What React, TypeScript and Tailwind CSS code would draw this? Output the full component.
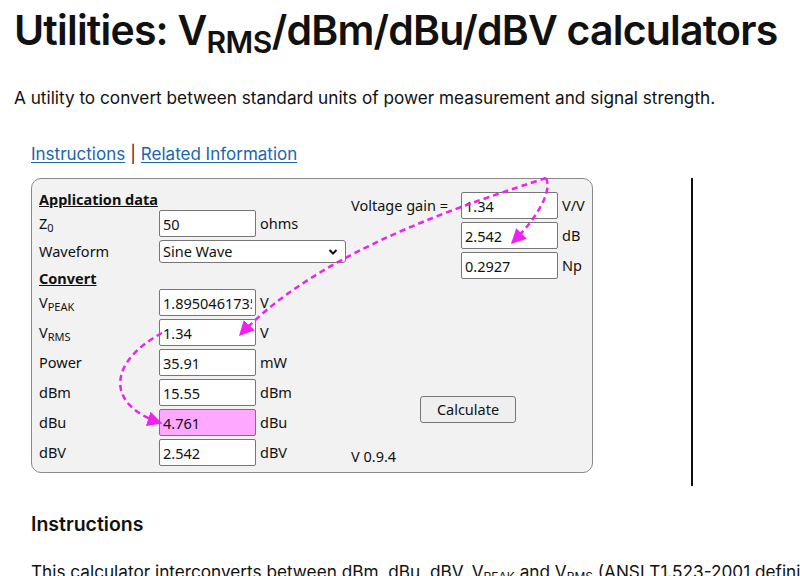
import React from "react";

const calcFont = { fontFamily: '"Noto Sans", "Open Sans", sans-serif' };

function Field({ value, pink }: { value: string; pink?: boolean }) {
  return (
    <input
      readOnly
      value={value}
      className={
        "h-[27px] w-[97px] rounded-[2px] border border-[#767676] px-[3px] text-[14.5px] text-[#111] outline-none " +
        (pink ? "bg-[#ffa8ff]" : "bg-white")
      }
      style={calcFont}
    />
  );
}

function Row({ label, value, unit, pink }: { label: React.ReactNode; value: string; unit: string; pink?: boolean }) {
  return (
    <div className="flex h-[27px] items-center">
      <div className="w-[120px] text-[14.5px] text-[#111]">{label}</div>
      <Field value={value} pink={pink} />
      <div className="ml-[4px] text-[14.5px] text-[#111]">{unit}</div>
    </div>
  );
}

function Sub({ v, s }: { v: string; s: string }) {
  return (
    <span>
      {v}
      <span className="relative top-[3px] text-[11px]">{s}</span>
    </span>
  );
}

export default function App() {
  return (
    <div className="relative h-[576px] w-[800px] overflow-hidden bg-white text-[#111]">
      <h1
        className="whitespace-nowrap pl-[14px] pt-[5px] text-[41px] font-semibold leading-[50px] tracking-[-0.8px] text-[#111]"
        style={{ fontFamily: "Inter, sans-serif" }}
      >
        Utilities: V<span className="relative top-[8px] text-[30px] tracking-[-0.5px]">RMS</span>/dBm/dBu/dBV calculators
      </h1>
      <p className="mt-[27px] pl-[14px] text-[17.2px] leading-[24px]" style={{ fontFamily: "Inter, sans-serif" }}>
        A utility to convert between standard units of power measurement and signal strength.
      </p>

      <div className="mt-[32px] flex items-center pl-[31px] text-[17px] leading-[24px]" style={{ fontFamily: "Inter, sans-serif" }}>
        <a className="text-[#1c64b0] underline underline-offset-2" href="#">
          Instructions
        </a>
        <span className="mx-[5px] text-[#3a2a20]">|</span>
        <a className="text-[#1c64b0] underline underline-offset-2" href="#">
          Related Information
        </a>
      </div>

      <div className="mt-[12px] flex pl-[31px]">
        <div
          className="flex h-[295px] w-[562px] rounded-[10px] border border-[#8a8a8a] bg-[#f2f2f2] pl-[7px]"
          style={calcFont}
        >
          <div className="flex w-[312px] flex-col pt-[10px]">
            <div className="h-[20px] text-[14.5px] font-bold leading-[20px] underline">Application data</div>
            <div className="mt-[1px]">
              <Row label={<Sub v="Z" s="0" />} value="50" unit="ohms" />
            </div>
            <div className="mt-[3px] flex h-[23px] items-center">
              <div className="w-[120px] text-[14.5px]">Waveform</div>
              <div className="relative flex h-[23px] w-[187px] items-center rounded-[3px] border border-[#767676] bg-white pl-[3px] text-[14.5px]">
                Sine Wave
                <svg className="absolute right-[7px] top-[7px]" width="10" height="8" viewBox="0 0 10 8">
                  <path d="M1.5 2 L5 5.5 L8.5 2" fill="none" stroke="#111" strokeWidth="2" />
                </svg>
              </div>
            </div>
            <div className="mt-[5px] h-[20px] text-[14.5px] font-bold leading-[20px] underline">Convert</div>
            <div className="mt-[1px] flex flex-col gap-[3px]">
              <Row label={<Sub v="V" s="PEAK" />} value="1.8950461735" unit="V" />
              <Row label={<Sub v="V" s="RMS" />} value="1.34" unit="V" />
              <Row label="Power" value="35.91" unit="mW" />
              <Row label="dBm" value="15.55" unit="dBm" />
              <Row label="dBu" value="4.761" unit="dBu" pink />
              <Row label="dBV" value="2.542" unit="dBV" />
            </div>
          </div>
          <div className="flex flex-col pt-[13px]">
            <div className="flex flex-col gap-[3px]">
              <div className="flex h-[27px] items-center">
                <div className="w-[110px] text-[14.5px]">Voltage gain =</div>
                <Field value="1.34" />
                <div className="ml-[4px] text-[14.5px]">V/V</div>
              </div>
              <div className="flex h-[27px] items-center">
                <div className="w-[110px]" />
                <Field value="2.542" />
                <div className="ml-[4px] text-[14.5px]">dB</div>
              </div>
              <div className="flex h-[27px] items-center">
                <div className="w-[110px]" />
                <Field value="0.2927" />
                <div className="ml-[4px] text-[14.5px]">Np</div>
              </div>
            </div>
            <button className="ml-[69px] mt-[117px] h-[27px] w-[96px] rounded-[3px] border border-[#767676] bg-[#efefef] text-[14.5px] text-[#111]">
              Calculate
            </button>
            <div className="mt-[24px] h-[18px] text-[14.5px] leading-[18px]">V 0.9.4</div>
          </div>
        </div>
        <div className="ml-[98px] h-[308px] w-[2px] bg-[#111]" />
      </div>

      <h2 className="mt-[25px] pl-[31px] text-[19.5px] font-semibold leading-[26px]" style={{ fontFamily: "Inter, sans-serif" }}>
        Instructions
      </h2>
      <p className="mt-[23px] whitespace-nowrap pl-[31px] text-[17.2px] leading-[24px]" style={{ fontFamily: "Inter, sans-serif" }}>
        This calculator interconverts between dBm, dBu, dBV, V<span className="relative top-[3px] text-[12px]">PEAK</span> and V
        <span className="relative top-[3px] text-[12px]">RMS</span> (ANSI T1.523-2001 definitions).
      </p>

      <svg className="pointer-events-none absolute left-0 top-0" width="800" height="576" viewBox="0 0 800 576">
        <defs>
          <marker id="ah" viewBox="0 0 10 10" refX="9" refY="5" markerWidth="6" markerHeight="6" orient="auto" markerUnits="strokeWidth">
            <path d="M0 0 L10 5 L0 10 Z" fill="#ee22ee" />
          </marker>
        </defs>
        <g fill="none" stroke="#ee22ee" strokeWidth="2.5" strokeDasharray="6 4">
          <path d="M546 178 C 470 203 320 250 240 335" markerEnd="url(#ah)" />
          <path d="M546 178 C 552 190 540 215 512 243" markerEnd="url(#ah)" />
          <path d="M162 333 C 108 362 105 405 161 423" markerEnd="url(#ah)" />
        </g>
      </svg>
    </div>
  );
}
